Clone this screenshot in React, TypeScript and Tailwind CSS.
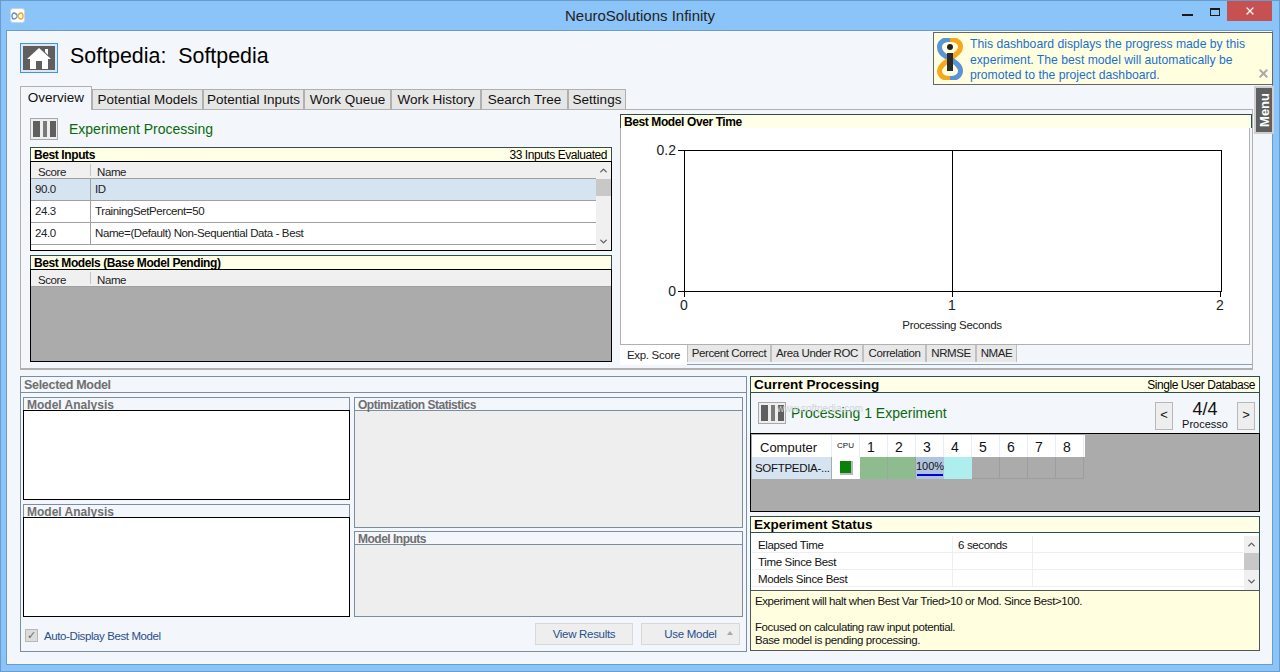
import { ChevronDown, ChevronUp, X } from 'lucide-react';

const mainTabs = [
  { label: 'Potential Models', w: 'w-[111px]' },
  { label: 'Potential Inputs', w: 'w-[101px]' },
  { label: 'Work Queue', w: 'w-[87px]' },
  { label: 'Work History', w: 'w-[90px]' },
  { label: 'Search Tree', w: 'w-[87px]' },
  { label: 'Settings', w: 'w-[58px]' },
];

const chartTabs = [
  { label: 'Percent Correct', w: 'w-[84px]' },
  { label: 'Area Under ROC', w: 'w-[92px]' },
  { label: 'Correlation', w: 'w-[63px]' },
  { label: 'NRMSE', w: 'w-[50px]' },
  { label: 'NMAE', w: 'w-[41px]' },
];

function AppIcon() {
  return (
    <div className="w-[15px] h-[15px] rounded-[3px] bg-white border border-[#c8d4e0] flex items-center justify-center">
      <svg width="13" height="8" viewBox="0 0 13 8" fill="none">
        <path d="M6.5 4C5.5 2 4.5 1 3 1 1.8 1 1 2.5 1 4s.8 3 2 3c1.5 0 2.5-1 3.5-3z" stroke="#5b8fd0" strokeWidth="1.4" />
        <path d="M6.5 4c1-2 2-3 3.5-3C11.2 1 12 2.5 12 4s-.8 3-2 3C8.5 7 7.5 6 6.5 4z" stroke="#f5a623" strokeWidth="1.4" />
      </svg>
    </div>
  );
}

function PauseButton() {
  return (
    <div className="w-[28px] h-[22px] bg-[#eeeeee] border border-[#a8a8a8] flex items-center justify-center gap-[3px]">
      <div className="w-[7px] h-[16px] bg-[#5f5f5f]" />
      <div className="w-[4px] h-[16px] bg-[#7a7a7a]" />
      <div className="w-[6px] h-[16px] bg-[#5f5f5f]" />
    </div>
  );
}

function Scrollbar({ thumb }: { thumb: string }) {
  return (
    <div className="w-[15px] h-full bg-[#f0f0f0] flex flex-col items-center shrink-0">
      <div className="h-[17px] flex items-center justify-center">
        <ChevronUp size={11} strokeWidth={3} color="#606060" />
      </div>
      <div className={`w-full bg-[#c8c8c8] ${thumb}`} />
      <div className="flex-1" />
      <div className="h-[17px] flex items-center justify-center">
        <ChevronDown size={11} strokeWidth={3} color="#606060" />
      </div>
    </div>
  );
}

function PanelHeader({ title, right, big }: { title: string; right?: string; big?: boolean }) {
  return (
    <div
      className={`flex items-center justify-between bg-[#ffffe8] border border-b-0 border-[#2f4f4f] ${
        big ? 'h-[16px] px-[3px] text-[13.5px]' : 'h-[14px] px-[3px] text-[12px] tracking-[-0.4px]'
      } text-black`}
    >
      <span className="font-bold leading-none whitespace-nowrap">{title}</span>
      {right && <span className="leading-none pr-[1px] text-[12px] font-normal tracking-[-0.45px] whitespace-nowrap">{right}</span>}
    </div>
  );
}

function TableHead() {
  return (
    <div className="h-[17px] flex bg-[#f0f0f0] border-b border-[#a0a0a0] text-[11.5px] tracking-[-0.4px] text-[#222]">
      <div className="w-[59px] pl-[7px] pt-[3px] leading-[14px]">
        <span>Score</span>
      </div>
      <div className="my-[2px] border-l border-[#c4c4c4] pl-[6px] pt-[1px] leading-[14px]">Name</div>
    </div>
  );
}

function InputRow({ score, name, selected }: { score: string; name: string; selected?: boolean }) {
  return (
    <div className={`h-[22px] flex border-b border-[#a0a0a0] text-[11.5px] tracking-[-0.4px] text-[#222] ${selected ? 'bg-[#d6e4f1]' : 'bg-white'}`}>
      <div className="w-[60px] pl-[4px] pt-[1px] flex items-center border-r border-[#a0a0a0]">{score}</div>
      <div className="pl-[4px] pt-[1px] flex items-center">{name}</div>
    </div>
  );
}

function SubPanel({ title, h, children, muted }: { title: string; h: string; children?: React.ReactNode; muted?: boolean }) {
  return (
    <div className={`flex flex-col ${h} border border-[#7a8ea0] ${muted ? 'bg-[#eeeeee]' : 'bg-[#f3f6fb]'}`}>
      <div
        className={`shrink-0 px-[3px] text-[12px] font-bold leading-[14px] text-[#6f6f6f] bg-[#f3f6fb] whitespace-nowrap ${
          muted ? 'border-b border-[#7a8ea0] tracking-[-0.5px] h-[13px]' : 'h-[12px]'
        }`}
      >
        {title}
      </div>
      {children}
    </div>
  );
}

function StatusRow({ label, value }: { label: string; value?: string }) {
  return (
    <div className="h-[17px] flex border-b border-[#eeeeee] text-[11.5px] tracking-[-0.35px] leading-[18px] text-[#111]">
      <div className="w-[201px] pl-[6px] border-r border-[#eeeeee]">{label}</div>
      <div className="w-[80px] pl-[5px] border-r border-[#eeeeee]">{value}</div>
    </div>
  );
}

function Chart() {
  return (
    <svg width="630" height="217" viewBox="0 0 630 217" fontFamily="Liberation Sans, sans-serif">
      <rect x="63.5" y="22.5" width="537" height="141" fill="white" stroke="black" />
      <line x1="331.5" y1="22" x2="331.5" y2="169" stroke="black" />
      <line x1="57" y1="22.5" x2="64" y2="22.5" stroke="black" />
      <line x1="57" y1="163.5" x2="64" y2="163.5" stroke="black" />
      <line x1="63.5" y1="163" x2="63.5" y2="169" stroke="black" />
      <line x1="599.5" y1="163" x2="599.5" y2="169" stroke="black" />
      <text x="55" y="27" fontSize="14" textAnchor="end" fill="#222">0.2</text>
      <text x="55" y="168" fontSize="14" textAnchor="end" fill="#222">0</text>
      <text x="63" y="182" fontSize="14" textAnchor="middle" fill="#222">0</text>
      <text x="331" y="182" fontSize="14" textAnchor="middle" fill="#222">1</text>
      <text x="599" y="182" fontSize="14" textAnchor="middle" fill="#222">2</text>
      <text x="331" y="201" fontSize="11.5" letterSpacing="-0.3" textAnchor="middle" fill="#222">Processing Seconds</text>
    </svg>
  );
}

export default function App() {
  return (
    <div className="relative w-[1280px] h-[672px] overflow-hidden bg-[#8bc4f8] border border-[#6a9ccb] font-['Liberation_Sans',sans-serif]">
      {/* title bar */}
      <div className="relative h-[29px] flex items-center pl-[9px]">
        <AppIcon />
        <div className="absolute inset-x-0 top-[6px] text-center text-[15px] leading-[18px] text-[#222]">NeuroSolutions Infinity</div>
        <div className="ml-auto flex items-start self-start pr-[7px]">
          <div className="w-[11px] h-[2px] bg-[#1a1a1a] mt-[13px] mr-[17px]" />
          <div className="w-[10px] h-[8px] border border-[#1a1a1a] border-t-2 mt-[7px] mr-[7px]" />
          <div className="w-[45px] h-[20px] bg-[#c75050] flex items-center justify-center">
            <X size={12} strokeWidth={2.5} color="white" />
          </div>
        </div>
      </div>

      {/* client area */}
      <div className="ml-[5px] w-[1267px] h-[635px] bg-[#f3f6fb] border border-[#6a9ccb] pl-[13px]">
        <div className="h-[30px] mt-[12px] flex items-start gap-[12px]">
          <div className="w-[38px] h-[30px] bg-[#dfe6ee] border border-[#3a96e8] p-[2px]">
            <div className="w-full h-full bg-[#5f5f5f] flex items-center justify-center">
              <svg width="26" height="22" viewBox="0 0 26 22">
                <path d="M13 1 L25 12 H22 V22 H16 V14 H10 V22 H4 V12 H1 Z M19 2 h3 v6 l-3 -3 z" fill="white" />
              </svg>
            </div>
          </div>
          <div className="text-[21.4px] leading-[26px] text-black whitespace-pre">Softpedia:  Softpedia</div>
        </div>

        {/* tab strip */}
        <div className="h-[24px] mt-[13px] flex items-end">
          <div className="w-[72px] h-[24px] bg-[#f3f6fb] border border-b-0 border-[#b0b0b0] text-[13.5px] leading-[22px] text-center text-[#111] relative z-10">
            Overview
          </div>
          {mainTabs.map((t) => (
            <div
              key={t.label}
              className={`${t.w} h-[21px] bg-[#e6e6e6] border border-[#b0b0b0] text-[13.5px] leading-[20px] text-center text-[#111] whitespace-nowrap`}
            >
              {t.label}
            </div>
          ))}
        </div>

        {/* overview page */}
        <div className="w-[1233px] h-[261px] -mt-px flex border-t border-l border-b-2 border-r border-[#b0b0b0]">
          <div className="w-[592px] pl-[9px] shrink-0">
            <div className="h-[22px] mt-[8px] flex items-center gap-[11px]">
              <PauseButton />
              <span className="text-[14px] text-[#0a6a0a]">Experiment Processing</span>
            </div>
            <div className="mt-[7px] w-[582px]">
              <PanelHeader title="Best Inputs" right="33 Inputs Evaluated" />
              <div className="h-[90px] border border-black bg-white flex overflow-hidden">
                <div className="flex-1">
                  <TableHead />
                  <InputRow score="90.0" name="ID" selected />
                  <InputRow score="24.3" name="TrainingSetPercent=50" />
                  <InputRow score="24.0" name="Name=(Default) Non-Sequential Data - Best" />
                </div>
                <Scrollbar thumb="h-[17px]" />
              </div>
            </div>
            <div className="mt-[4px] w-[582px]">
              <PanelHeader title="Best Models (Base Model Pending)" />
              <div className="h-[93px] border border-black bg-[#ababab]">
                <TableHead />
              </div>
            </div>
          </div>
          <div className="w-[632px] ml-[7px] pt-[4px] flex flex-col shrink-0">
            <PanelHeader title="Best Model Over Time" />
            <div className="w-[630px] h-[217px] bg-white border-l border-r border-b border-[#b0b0b0]">
              <Chart />
            </div>
            <div className="h-[20px] flex border-b border-[#8aa0b4]">
              <div className="w-[67px] h-[20px] bg-white text-[11.5px] tracking-[-0.3px] leading-[20px] text-center text-[#222] whitespace-nowrap">
                Exp. Score
              </div>
              {chartTabs.map((t) => (
                <div
                  key={t.label}
                  className={`${t.w} h-[17px] bg-[#e8e8e8] border-l border-r border-[#c0c0c0] text-[11.5px] tracking-[-0.4px] leading-[16px] text-center text-[#222] whitespace-nowrap`}
                >
                  {t.label}
                </div>
              ))}
            </div>
          </div>
        </div>

        {/* lower half */}
        <div className="mt-[6px] flex gap-[3px]">
          <div className="w-[727px] h-[276px] border border-[#7a8ea0] flex flex-col">
            <div className="h-[16px] border-b border-[#7a8ea0] pl-[3px] text-[12.5px] tracking-[-0.3px] font-bold leading-[17px] text-[#6f6f6f]">Selected Model</div>
            <div className="flex gap-[4px] pl-[2px] pt-[4px]">
              <div className="w-[327px] flex flex-col gap-[4px]">
                <SubPanel title="Model Analysis" h="h-[103px]">
                  <div className="flex-1 -mx-px -mb-px bg-white border border-black" />
                </SubPanel>
                <SubPanel title="Model Analysis" h="h-[113px]">
                  <div className="flex-1 -mx-px -mb-px bg-white border border-black" />
                </SubPanel>
              </div>
              <div className="w-[389px] flex flex-col gap-[3px]">
                <SubPanel title="Optimization Statistics" h="h-[131px]" muted />
                <SubPanel title="Model Inputs" h="h-[86px]" muted />
              </div>
            </div>
            <div className="flex items-start pl-[4px] pr-[6px] pt-[6px]">
              <div className="mt-[6px] w-[13px] h-[13px] bg-[#dcdcdc] border border-[#b8b8b8] flex items-center justify-center text-[11px] leading-none text-[#6a6a6a]">
                ✓
              </div>
              <span className="mt-[5px] ml-[6px] text-[11.5px] tracking-[-0.4px] leading-[16px] text-[#27508a]">Auto-Display Best Model</span>
              <div className="ml-auto w-[98px] h-[22px] bg-[#eeeeee] border border-[#d8d8d8] text-[11.5px] tracking-[-0.3px] leading-[20px] text-center text-[#27508a]">View Results</div>
              <div className="relative ml-[8px] w-[99px] h-[22px] bg-[#eeeeee] border border-[#d8d8d8] text-[11.5px] tracking-[-0.3px] leading-[20px] text-center text-[#27508a]">
                Use Model
                <span className="absolute right-[6px] top-[7px] w-0 h-0 border-x-[3px] border-x-transparent border-b-[4px] border-b-[#a8a8a8]" />
              </div>
            </div>
          </div>

          <div className="w-[510px] flex flex-col">
            <PanelHeader title="Current Processing" right="Single User Database" big />
            <div className="relative h-[41px] flex items-center border-l border-r border-t border-[#2f4f4f] pl-[7px] pr-[4px] bg-[#f3f6fb]">
              <PauseButton />
              <span className="relative ml-[5px] text-[14px] text-[#0a6a0a]">Processing 1 Experiment</span>
              <span className="absolute left-[26px] top-[8px] text-[10px] text-[#cfd4da]">www.softpedia.com</span>
              <div className="ml-auto mt-[6px] w-[18px] h-[28px] bg-[#eeeeee] border border-[#b8b8b8] text-[13px] leading-[24px] text-center text-[#111]">&lt;</div>
              <div className="w-[64px] mt-[3px] text-center text-[#111] flex flex-col items-center">
                <span className="text-[18px] leading-[18px]">4/4</span>
                <span className="text-[11px] leading-[12px]">Processo</span>
              </div>
              <div className="mt-[6px] w-[18px] h-[28px] bg-[#eeeeee] border border-[#b8b8b8] text-[13px] leading-[24px] text-center text-[#111]">&gt;</div>
            </div>
            <div className="h-[79px] border border-black bg-[#ababab] pl-[1px] pt-[1px]">
              <div className="flex h-[22px] bg-white w-[333px] text-[13px] text-[#111]">
                <div className="w-[80px] pl-[8px] leading-[25px] border-r border-[#e4edf8]">Computer</div>
                <div className="w-[28px] text-[8px] leading-[22px] text-center border-r border-[#e4edf8]">CPU</div>
                {[1, 2, 3, 4, 5, 6, 7, 8].map((n) => (
                  <div key={n} className="w-[28px] pl-[7px] text-[14px] leading-[25px] border-r border-[#e4edf8]">
                    {n}
                  </div>
                ))}
              </div>
              <div className="flex h-[22px] w-[333px] text-[12px] text-[#111]">
                <div className="w-[80px] pl-[3px] text-[11.5px] tracking-[-0.3px] leading-[22px] bg-[#d6e4f1] border-r border-[#ababab] whitespace-nowrap">SOFTPEDIA-...</div>
                <div className="w-[28px] bg-white flex items-center justify-center">
                  <div className="w-[13px] h-[14px] bg-[#0a820a] border-r-2 border-b-2 border-[#b8b8b8]" />
                </div>
                <div className="w-[28px] bg-[#8fbc8f] border-r border-[#9aa89a]" />
                <div className="w-[28px] bg-[#8fbc8f] border-r border-[#9aa89a]" />
                <div className="w-[28px] bg-[#b0c4de] text-[11px] leading-[18px] text-center relative">
                  100%
                  <div className="absolute left-[1px] right-[1px] bottom-[3px] h-[2px] bg-[#0000e0]" />
                </div>
                <div className="w-[28px] bg-[#afeeee]" />
                {[5, 6, 7, 8].map((n) => (
                  <div key={n} className="w-[28px] border-r border-b border-[#9d9d9d]" />
                ))}
              </div>
            </div>
            <div className="mt-[4px]">
              <PanelHeader title="Experiment Status" big />
              <div className="border-l border-r border-t border-[#2f4f4f] flex h-[58px] bg-white pt-[3px] pl-[1px]">
                <div className="flex-1">
                  <StatusRow label="Elapsed Time" value="6 seconds" />
                  <StatusRow label="Time Since Best" />
                  <StatusRow label="Models Since Best" />
                </div>
                <Scrollbar thumb="h-[17px]" />
              </div>
              <div className="h-[61px] bg-[#ffffe0] border border-[#555] pl-[4px] pt-[4px] text-[11.5px] tracking-[-0.4px] leading-[13px] text-[#111]">
                <div>Experiment will halt when Best Var Tried&gt;10 or Mod. Since Best&gt;100.</div>
                <div className="mt-[13px]">Focused on calculating raw input potential.</div>
                <div>Base model is pending processing.</div>
              </div>
            </div>
          </div>
        </div>
      </div>

      {/* info balloon */}
      <div className="absolute left-[932px] top-[31px] w-[340px] h-[53px] bg-[#ffffe0] border border-[#666] flex pl-[3px] pt-[5px]">
        <svg width="26" height="42" viewBox="0 0 26 42" className="shrink-0">
          <path d="M13 21 C4 16 2.5 13 2.5 9 C2.5 4 7 1.5 13 1.5" fill="none" stroke="#5a93d8" strokeWidth="5" />
          <path d="M13 1.5 C19 1.5 23.5 4 23.5 9 C23.5 14 18 17 13 21" fill="none" stroke="#f5a81c" strokeWidth="5" />
          <path d="M13 21 C8 25 2.5 28 2.5 33 C2.5 38 7 40.5 13 40.5" fill="none" stroke="#f5a81c" strokeWidth="5" />
          <path d="M13 40.5 C19 40.5 23.5 38 23.5 33 C23.5 28 20 25 13 21" fill="none" stroke="#5a93d8" strokeWidth="5" />
          <circle cx="13" cy="9" r="3" fill="#222" />
          <rect x="10" y="15" width="6" height="18" fill="#2a2a2a" />
        </svg>
        <div className="ml-[7px] -mt-[1px] text-[12.2px] leading-[15.5px] text-[#1a6fd0] whitespace-nowrap">
          This dashboard displays the progress made by this
          <br />
          experiment. The best model will automatically be
          <br />
          promoted to the project dashboard.
        </div>
        <X size={13} strokeWidth={3.5} color="#a8a8a8" className="absolute right-[2px] bottom-[4px]" />
      </div>

      {/* side menu tab */}
      <div className="absolute left-[1253px] top-[85px] w-[20px] h-[48px] bg-[#5f5f5f] border-2 border-[#cfcfcf] flex items-center justify-center">
        <span className="[writing-mode:vertical-rl] rotate-180 text-[13px] font-bold leading-none text-white">Menu</span>
      </div>
    </div>
  );
}
